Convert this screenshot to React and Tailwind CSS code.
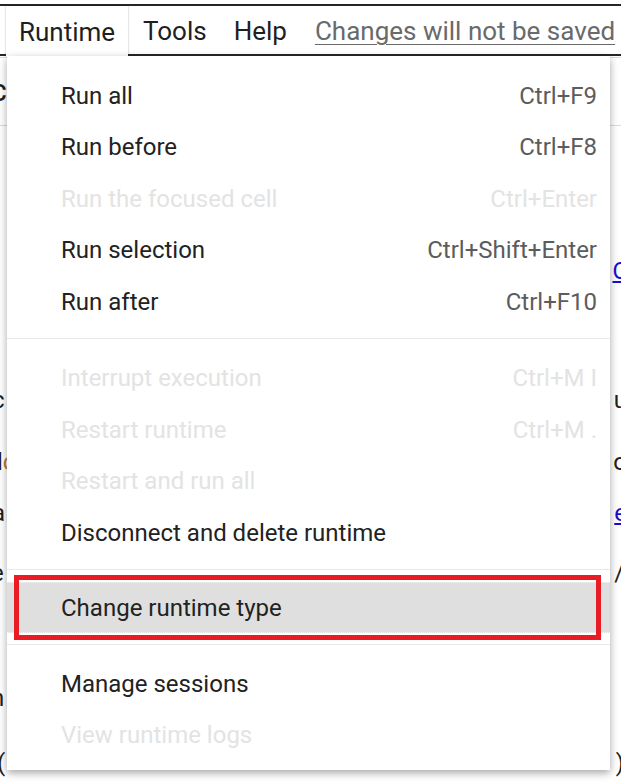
import React from "react";

const groups = [
  {
    pad: "pt-[13px] pb-[11px]",
    items: [
      { label: "Run all", keys: "Ctrl+F9" },
      { label: "Run before", keys: "Ctrl+F8" },
      { label: "Run the focused cell", keys: "Ctrl+Enter", off: true },
      { label: "Run selection", keys: "Ctrl+Shift+Enter" },
      { label: "Run after", keys: "Ctrl+F10" },
    ],
  },
  {
    pad: "pt-[13px] pb-[11px]",
    items: [
      { label: "Interrupt execution", keys: "Ctrl+M I", off: true },
      { label: "Restart runtime", keys: "Ctrl+M .", off: true },
      { label: "Restart and run all", off: true },
      { label: "Disconnect and delete runtime" },
    ],
  },
  {
    pad: "pt-[12px] pb-[11px]",
    items: [{ label: "Change runtime type", active: true }],
  },
  {
    pad: "pt-[12px] pb-[10px]",
    items: [
      { label: "Manage sessions" },
      { label: "View runtime logs", off: true },
    ],
  },
];

function MenuRow({ item }) {
  return (
    <div
      className={
        "flex h-[51.5px] items-center justify-between pl-[54px] pr-[13px] pt-[2px] " +
        (item.active ? "border-y border-dotted border-[#f4f4f4] bg-[#dfdfdf]" : "")
      }
    >
      <span className={item.off ? "text-[#e3e3e3]" : "text-[#222222]"}>{item.label}</span>
      {item.keys && (
        <span className={item.off ? "text-[#e3e3e3]" : "text-[#5c5c5c]"}>{item.keys}</span>
      )}
    </div>
  );
}

export default function App() {
  return (
    <div
      className="relative h-[783px] w-[621px] overflow-hidden bg-white text-[24px] leading-none"
      style={{ fontFamily: "Roboto, 'Liberation Sans', sans-serif" }}
    >
      {/* menu bar */}
      <div className="mt-[4px] flex h-[52px] items-stretch border-y-2 border-[#262626] bg-white text-[26px]">
        <div className="relative z-10 -mb-[2px] ml-[6px] flex w-[122px] items-center bg-white pl-[13px] pt-[2px] text-[#1f1f1f] shadow-[0_0_2px_rgba(0,0,0,0.3)]">
          Runtime
        </div>
        <div className="flex items-center pl-[15px] pt-[2px] text-[#1f1f1f]">Tools</div>
        <div className="flex items-center pl-[27px] pt-[2px] text-[#1f1f1f]">Help</div>
        <div className="flex items-center whitespace-nowrap pl-[28px] pt-[2px] text-[#6a6a6a] underline decoration-1 underline-offset-[4px]">
          Changes will not be saved
        </div>
      </div>

      {/* notebook content behind the menu */}
      <div className="flex flex-col text-[#202020]">
        <div className="mt-[1px] h-px bg-[#dcdcdc]" />
        <div className="mt-[15px] flex h-[40px] items-center justify-between">
          <span className="-ml-[9px] font-medium">C</span>
          <span />
        </div>
        <div className="mt-[12px] h-px bg-[#dcdcdc]" />
        <div className="mt-[125px] flex h-[40px] items-center justify-between">
          <span />
          <span className="-mr-[8px] text-[#1a0dcc] underline">Q</span>
        </div>
        <div className="mt-[27px] flex h-[40px] items-center justify-between">
          <span className="-ml-[5px]">l</span>
          <span />
        </div>
        <div className="mt-[22px] flex h-[40px] items-center justify-between">
          <span className="-ml-[8px]">c</span>
          <span className="-mr-[6px]">u</span>
        </div>
        <div className="mt-[22px] flex h-[40px] items-center justify-between">
          <span className="-ml-[3px]">l<span className="text-[#c07a30]">c</span></span>
          <span className="-mr-[14px]">o<span className="text-[#c07a30]">r</span></span>
        </div>
        <div className="mt-[11px] flex h-[40px] items-center justify-between">
          <span className="-ml-[8px]">a</span>
          <span className="-mr-[6px] text-[#1a0dcc] underline">e</span>
        </div>
        <div className="mt-[20px] flex h-[40px] items-center justify-between">
          <span className="-ml-[9px]">e</span>
          <span className="-mr-[9px]">/l</span>
        </div>
        <div className="mt-[85px] flex h-[40px] items-center justify-between">
          <span className="-ml-[9px]">n</span>
          <span />
        </div>
        <div className="mt-[25px] flex h-[40px] items-center justify-between">
          <span className="-ml-[3px]">(</span>
          <span className="-mr-[3px]">)</span>
        </div>
      </div>

      {/* dropdown */}
      <div className="absolute left-[7px] top-[56px] z-20 w-[603px] bg-white shadow-[0_3px_8px_rgba(0,0,0,0.35)]">
        {groups.map((g, i) => (
          <div key={i} className={g.pad + (i > 0 ? " border-t border-[#e8e8e8]" : "")}>
            {g.items.map((item) => (
              <MenuRow key={item.label} item={item} />
            ))}
          </div>
        ))}
      </div>

      {/* annotation box */}
      <div className="absolute left-[14px] top-[575px] z-30 h-[65px] w-[587px] border-[5px] border-[#e81c24]" />
    </div>
  );
}
